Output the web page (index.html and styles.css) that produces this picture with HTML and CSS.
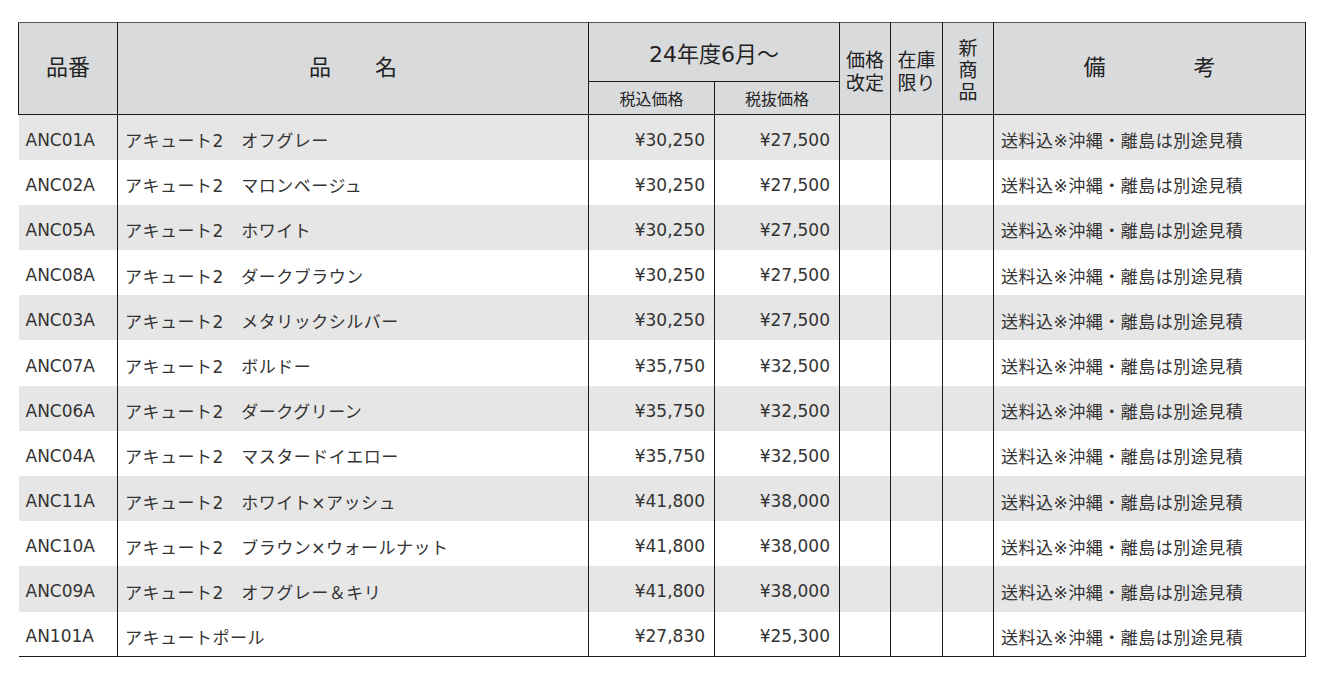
FILE: index.html
```html
<!DOCTYPE html>
<html lang="ja">
<head>
<meta charset="utf-8">
<title>価格表</title>
<link rel="stylesheet" href="styles.css">
</head>
<body>
<div class="wrap">
<table class="price">
  <colgroup>
    <col class="c-code"><col class="c-name"><col class="c-price"><col class="c-price2"><col class="c-flag"><col class="c-flag2"><col class="c-flag"><col class="c-note">
  </colgroup>
  <thead>
    <tr class="h1">
      <th rowspan="2" class="first">品番</th>
      <th rowspan="2">品　　名</th>
      <th colspan="2" class="period">24年度6月～</th>
      <th rowspan="2" class="small">価格<br>改定</th>
      <th rowspan="2" class="small">在庫<br>限り</th>
      <th rowspan="2" class="small vert">新<br>商<br>品</th>
      <th rowspan="2">備　　　　考</th>
    </tr>
    <tr class="h2">
      <th class="sub">税込価格</th>
      <th class="sub">税抜価格</th>
    </tr>
  </thead>
  <tbody>
    <tr><td class="code">ANC01A</td><td class="jp">アキュート2　オフグレー</td><td class="num">¥30,250</td><td class="num">¥27,500</td><td></td><td></td><td></td><td class="jp">送料込※沖縄・離島は別途見積</td></tr>
    <tr><td class="code">ANC02A</td><td class="jp">アキュート2　マロンベージュ</td><td class="num">¥30,250</td><td class="num">¥27,500</td><td></td><td></td><td></td><td class="jp">送料込※沖縄・離島は別途見積</td></tr>
    <tr><td class="code">ANC05A</td><td class="jp">アキュート2　ホワイト</td><td class="num">¥30,250</td><td class="num">¥27,500</td><td></td><td></td><td></td><td class="jp">送料込※沖縄・離島は別途見積</td></tr>
    <tr><td class="code">ANC08A</td><td class="jp">アキュート2　ダークブラウン</td><td class="num">¥30,250</td><td class="num">¥27,500</td><td></td><td></td><td></td><td class="jp">送料込※沖縄・離島は別途見積</td></tr>
    <tr><td class="code">ANC03A</td><td class="jp">アキュート2　メタリックシルバー</td><td class="num">¥30,250</td><td class="num">¥27,500</td><td></td><td></td><td></td><td class="jp">送料込※沖縄・離島は別途見積</td></tr>
    <tr><td class="code">ANC07A</td><td class="jp">アキュート2　ボルドー</td><td class="num">¥35,750</td><td class="num">¥32,500</td><td></td><td></td><td></td><td class="jp">送料込※沖縄・離島は別途見積</td></tr>
    <tr><td class="code">ANC06A</td><td class="jp">アキュート2　ダークグリーン</td><td class="num">¥35,750</td><td class="num">¥32,500</td><td></td><td></td><td></td><td class="jp">送料込※沖縄・離島は別途見積</td></tr>
    <tr><td class="code">ANC04A</td><td class="jp">アキュート2　マスタードイエロー</td><td class="num">¥35,750</td><td class="num">¥32,500</td><td></td><td></td><td></td><td class="jp">送料込※沖縄・離島は別途見積</td></tr>
    <tr><td class="code">ANC11A</td><td class="jp">アキュート2　ホワイト×アッシュ</td><td class="num">¥41,800</td><td class="num">¥38,000</td><td></td><td></td><td></td><td class="jp">送料込※沖縄・離島は別途見積</td></tr>
    <tr><td class="code">ANC10A</td><td class="jp">アキュート2　ブラウン×ウォールナット</td><td class="num">¥41,800</td><td class="num">¥38,000</td><td></td><td></td><td></td><td class="jp">送料込※沖縄・離島は別途見積</td></tr>
    <tr><td class="code">ANC09A</td><td class="jp">アキュート2　オフグレー＆キリ</td><td class="num">¥41,800</td><td class="num">¥38,000</td><td></td><td></td><td></td><td class="jp">送料込※沖縄・離島は別途見積</td></tr>
    <tr><td class="code">AN101A</td><td class="jp">アキュートポール</td><td class="num">¥27,830</td><td class="num">¥25,300</td><td></td><td></td><td></td><td class="jp">送料込※沖縄・離島は別途見積</td></tr>
  </tbody>
</table>
</div>
</body>
</html>
```

FILE: styles.css
```css
html, body {
  margin: 0;
  padding: 0;
  background: #ffffff;
}

body {
  font-family: "DejaVu Sans", "Noto Sans CJK JP", sans-serif;
  color: #333333;
}

.wrap {
  padding: 22px 0 0 18px;
}

.price {
  border-collapse: collapse;
  table-layout: fixed;
  width: 1288px;
}

.c-code { width: 99px; }
.c-name { width: 471px; }
.c-price { width: 126px; }
.c-price2 { width: 125px; }
.c-flag { width: 51px; }
.c-flag2 { width: 52px; }
.c-note { width: 312px; }

.price th {
  background: #d9dadc;
  color: #222222;
  font-weight: normal;
  font-size: 22px;
  border: 1px solid #1a1a1a;
  border-top: 1px solid #555555;
  padding: 0;
  text-align: center;
  vertical-align: middle;
  line-height: 1.2;
}

.price tr.h1 {
  height: 59px;
}

.price tr.h2 {
  height: 33px;
}

.price th.period {
  font-size: 22px;
  padding-top: 6px;
}

.price th.sub {
  font-size: 16px;
  border-top: 1px solid #1a1a1a;
  padding-top: 4px;
}

.price th.small {
  font-size: 19px;
  line-height: 23px;
  padding-top: 6px;
}

.price th.vert {
  line-height: 22px;
  padding-top: 2px;
}

.price tbody tr {
  height: 45.2px;
}

.price tbody tr:nth-child(odd) td {
  background: #e6e6e6;
}

.price td {
  font-size: 17px;
  padding: 5px 8px 0 8px;
  border-left: 1px solid #1a1a1a;
  border-right: 1px solid #1a1a1a;
  white-space: nowrap;
  vertical-align: middle;
}

.price td.code {
  border-left: none;
  padding-left: 7px;
}

.price td.jp {
  letter-spacing: 0.5px;
  padding-left: 7px;
}

.price td.num {
  text-align: right;
  padding-right: 9px;
}

.price tbody tr:last-child td {
  border-bottom: 1px solid #1a1a1a;
}
```
